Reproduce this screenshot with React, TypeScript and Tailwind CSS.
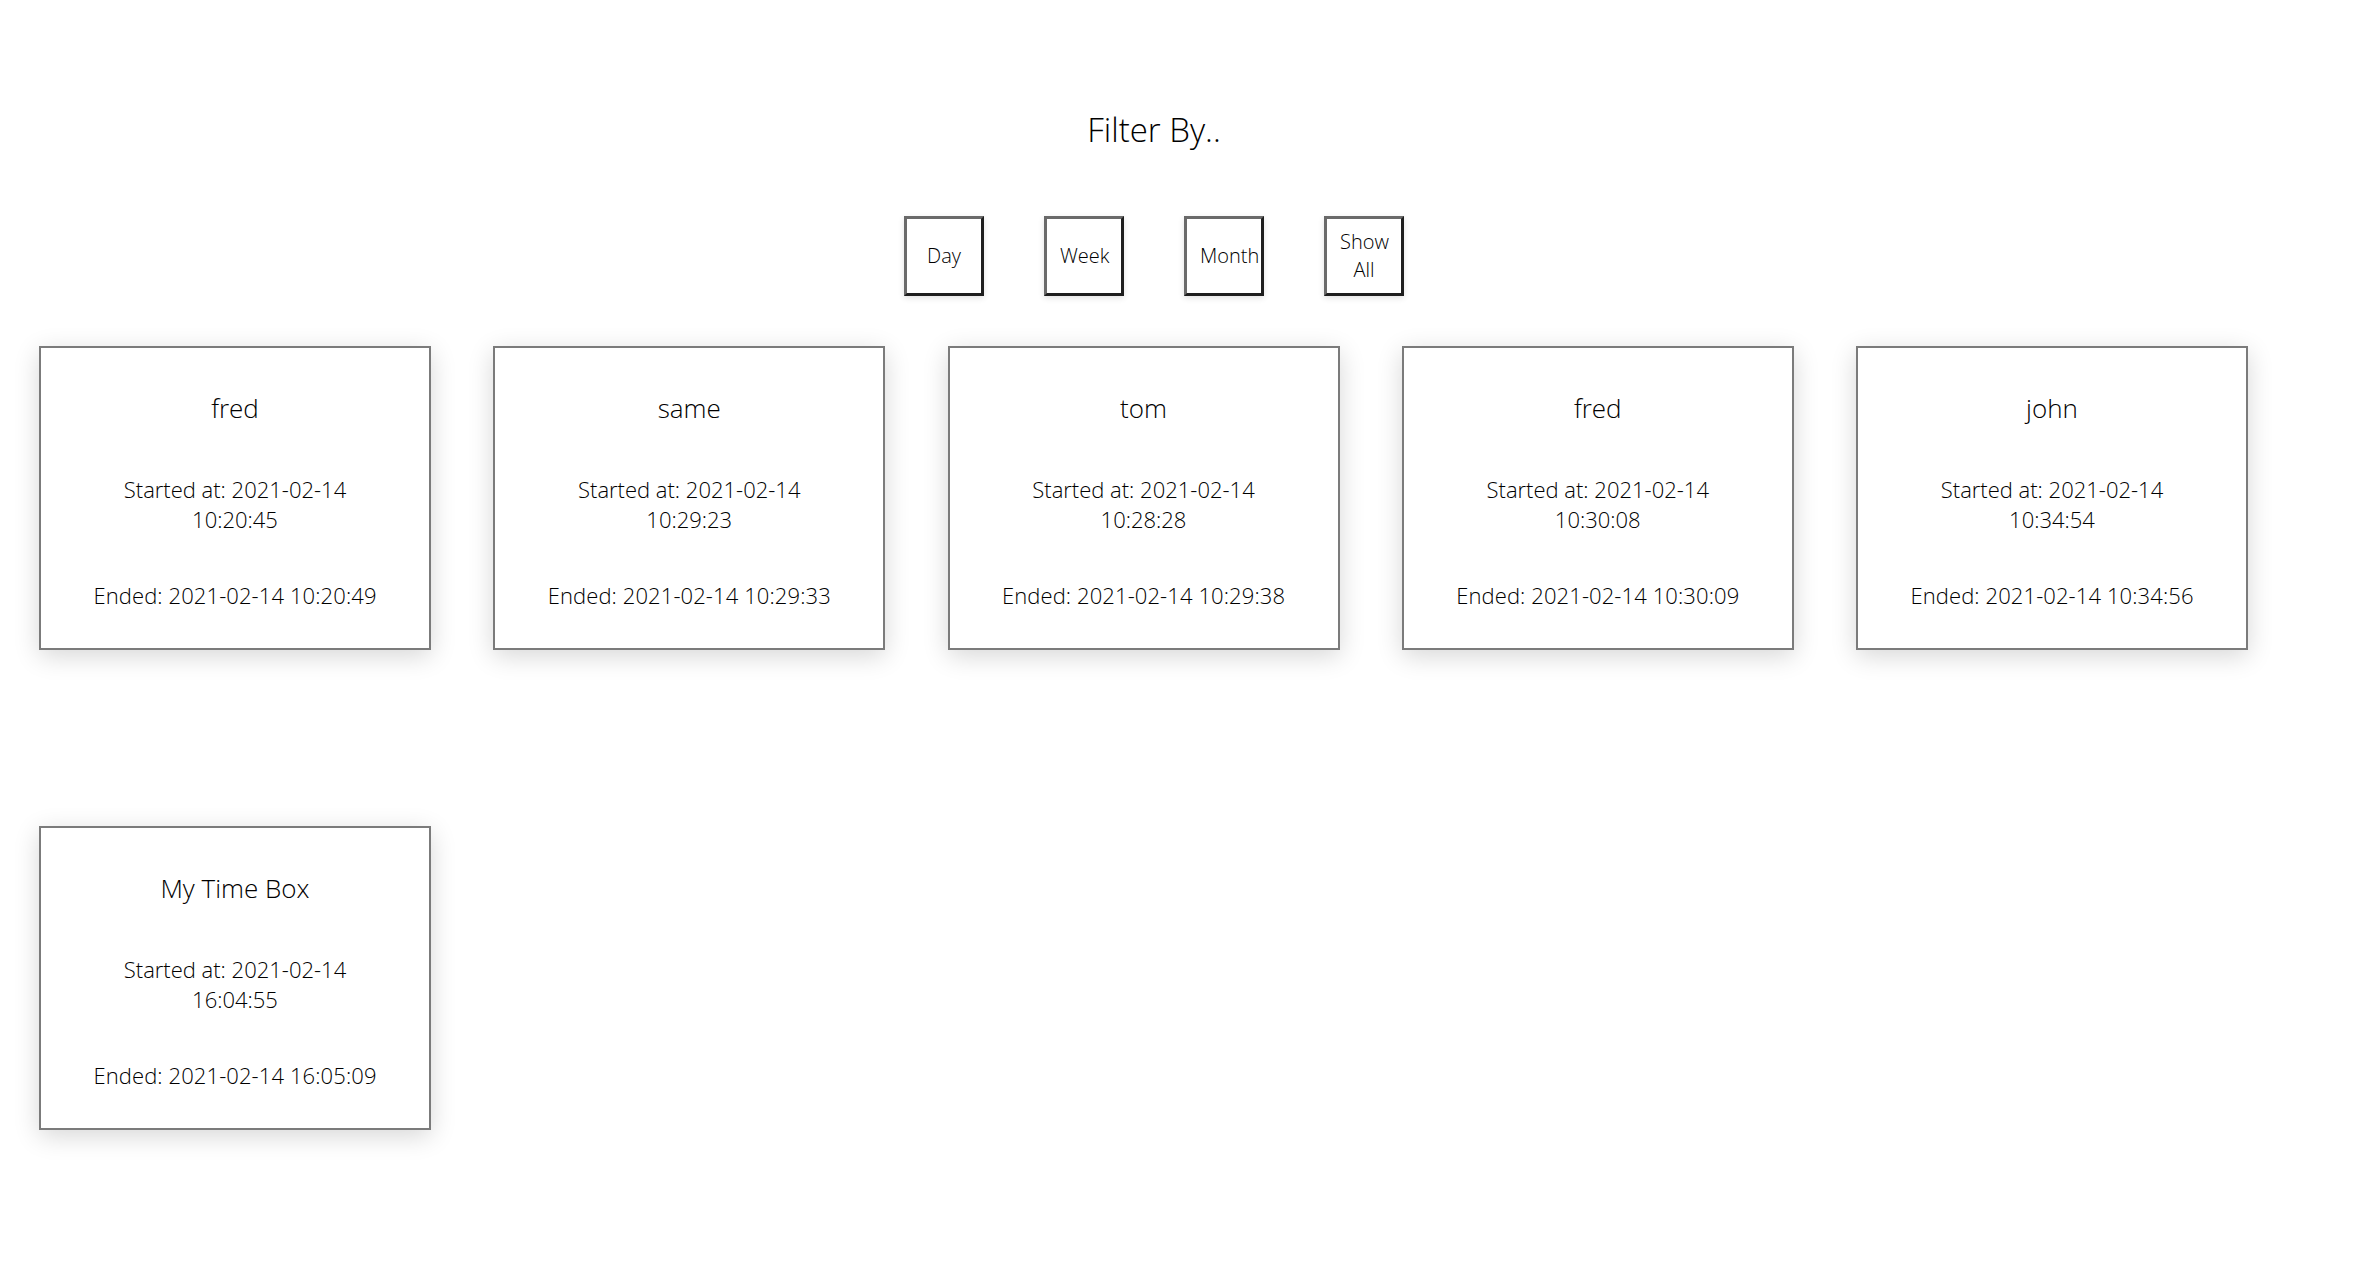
const boxes = [
  { name: "fred", start: "2021-02-14 10:20:45", end: "2021-02-14 10:20:49" },
  { name: "same", start: "2021-02-14 10:29:23", end: "2021-02-14 10:29:33" },
  { name: "tom", start: "2021-02-14 10:28:28", end: "2021-02-14 10:29:38" },
  { name: "fred", start: "2021-02-14 10:30:08", end: "2021-02-14 10:30:09" },
  { name: "john", start: "2021-02-14 10:34:54", end: "2021-02-14 10:34:56" },
  { name: "My Time Box", start: "2021-02-14 16:04:55", end: "2021-02-14 16:05:09" },
];

const filters = ["Day", "Week", "Month", "Show All"];

function FilterButton({ label }: { label: string }) {
  return (
    <button className="w-[80px] h-[80px] bg-white border-[3px] border-t-[#6a6a6a] border-l-[#6a6a6a] border-b-[#1e1e1e] border-r-[#1e1e1e] px-[13px] text-[20px] leading-[28px] text-black shadow-[0_2px_6px_rgba(0,0,0,0.12)] overflow-visible whitespace-normal">
      {label}
    </button>
  );
}

function TimeBox({ name, start, end }: { name: string; start: string; end: string }) {
  const [day, time] = start.split(" ");
  return (
    <div className="w-[392px] h-[304px] bg-white border-2 border-[#7b7b7b] shadow-[0_6px_24px_rgba(0,0,0,0.16)] text-center text-black flex flex-col items-center">
      <h2 className="mt-[42px] text-[26px] leading-[36px]">{name}</h2>
      <p className="mt-[48px] text-[22px] leading-[30px]">
        Started at: {day}
        <br />
        {time}
      </p>
      <p className="mt-[46px] text-[22px] leading-[30px] tracking-[0.1px]">Ended: {end}</p>
    </div>
  );
}

export default function App() {
  return (
    <div className="min-h-screen bg-white font-['Open_Sans',sans-serif] font-light">
      <div className="flex flex-col items-center pr-[56px] pt-[107px]">
        <h1 className="text-[33px] leading-[45px] text-black">Filter By..</h1>
        <div className="flex gap-[60px] mt-[64px]">
          {filters.map((f) => (
            <FilterButton key={f} label={f} />
          ))}
        </div>
      </div>
      <div className="flex flex-wrap gap-x-[62.25px] gap-y-[176px] pl-[39px] mt-[50px]">
        {boxes.map((b, i) => (
          <TimeBox key={i} {...b} />
        ))}
      </div>
    </div>
  );
}
